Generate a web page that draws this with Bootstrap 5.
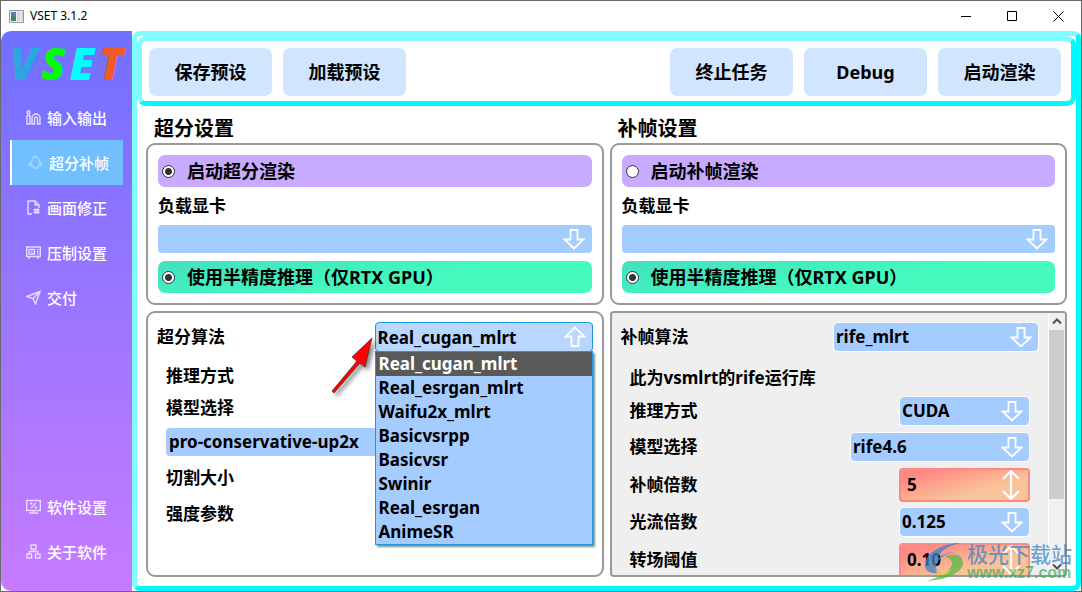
<!DOCTYPE html>
<html lang="zh-CN">
<head>
<meta charset="utf-8">
<meta name="viewport" content="width=device-width, initial-scale=1">
<title>VSET 3.1.2</title>
<link href="https://cdn.jsdelivr.net/npm/bootstrap@5.3.0/dist/css/bootstrap.min.css" rel="stylesheet">
<style>
  :root { --cy-light: #80fbff; --cy: #00f8ff; --line: #999; --sky: #a5ccff; }
  body { background: #6a6a6a; color: #000; font: 700 17px/24px "Noto Sans", "Noto Sans CJK SC", sans-serif; }
  .app { height: calc(100vh - 2px); margin: 1px; background: #fff; }
  .fit { min-height: 0; }
  .titlebar { height: 30px; padding-left: 8px; font-size: 12px; font-weight: 400; gap: 6px; }
  .titlebar button { width: 46px; height: 30px; padding: 0; border: 0; background: none; display: flex; align-items: center; justify-content: center; }

  .side { width: 131px; padding: 0 9px 17px; border-radius: 10px 0 0 10px; background: linear-gradient(#7070ff, #c77bff); }
  .logo { height: 64px; font: italic 900 44px/64px "Noto Sans", sans-serif; }
  .side a { height: 45px; padding-left: 16px; gap: 6px; color: #fff; font-size: 15px; font-weight: 500; text-decoration: none; white-space: nowrap; display: flex; align-items: center; }
  .side a.on { background: #72bfff; border-left: 2px solid #fff; }
  .side svg { width: 15px; height: 15px; fill: none; stroke: #e6dcff; stroke-width: 1.4; flex: none; }
  .side a.on svg { stroke: #9fd3ff; stroke-width: 1.8; }

  .frame { border: 5px solid; border-color: var(--cy-light) var(--cy) var(--cy) var(--cy-light); border-radius: 8px; min-width: 0; }
  .tools { border: 5px solid; border-color: var(--cy-light) var(--cy) var(--cy) var(--cy-light); border-radius: 9px; padding: 7px 10px 5px 7px; gap: 11px; }
  .tools .btn { width: 123px; height: 48px; padding: 0; border: 0; border-radius: 7px; background: #d1e5ff; color: #000; font-size: 18px; font-weight: 700; }

  .pair { display: grid; grid-template-columns: 1fr 1fr; column-gap: 6px; padding: 0 9px; }
  .pair h2 { margin: 0; padding: 9px 0 0 8px; font-size: 20px; font-weight: 700; line-height: 28px; }
  .lower { padding-top: 6px; padding-bottom: 9px; grid-template-rows: minmax(0, 1fr); }
  .box { border: 2px solid var(--line); border-radius: 9px; min-width: 0; }
  .switches { padding: 10px; }
  .opt { height: 32px; border-radius: 7px; padding-left: 4px; gap: 12px; font-size: 18px; display: flex; align-items: center; }
  .opt input { appearance: none; width: 13px; height: 13px; margin: 0; border: 1px solid #333; border-radius: 50%; background: #fff; flex: none; }
  .opt input:checked { background: radial-gradient(circle, #333 0 3px, #fff 4px); }
  .violet { background: #c8aaff; }
  .mint { background: linear-gradient(170deg, #43e0bf, #44fabf 60%); }
  .gpu { line-height: 38px; }

  .combo { display: block; width: 100%; height: 28px; padding: 0 36px 0 3px; border: 0; border-radius: 4px; appearance: none; color: #000; font-weight: 700;
    background: var(--sky) url("data:image/svg+xml,%3Csvg xmlns='http://www.w3.org/2000/svg' width='22' height='22'%3E%3Cpath d='M7.500 2h7v9.500h6L11 20.500 1.500 11.500h6z' fill='none' stroke='white' stroke-width='1.8'/%3E%3C/svg%3E") no-repeat right 7px center; }
  .edged { padding-left: 2px; border: 1px solid #fff; border-radius: 5px; background-position: right 6px center; height: 30px; }
  .w-a { width: 206px; }
  .w-b { width: 180px; }
  .w-c { width: 131px; }
  .spin { height: 34px; padding: 0 36px 0 6px; border: 2px solid #fc8983; border-radius: 4px; font-weight: 700; appearance: textfield; color: #000;
    background: url("data:image/svg+xml,%3Csvg xmlns='http://www.w3.org/2000/svg' width='18' height='32'%3E%3Cpath d='M9 2v28M1 10l8-8 8 8M1 22l8 8 8-8' fill='none' stroke='white' stroke-width='2.200'/%3E%3C/svg%3E") no-repeat right 8px center, linear-gradient(165deg, #ff8985 15%, #f8c398 65%); }
  .spin::-webkit-inner-spin-button { appearance: none; margin: 0; }

  .algo { padding: 9px 9px 0; }
  .pick { width: 218px; flex: none; }
  .pick .combo { height: 30px; padding: 1px 36px 0 2px; border: 1px solid #1e98dc; background-color: #b8d6ff; background-position: right 6px center;
    background-image: url("data:image/svg+xml,%3Csvg xmlns='http://www.w3.org/2000/svg' width='22' height='22'%3E%3Cpath d='M7.500 20h7v-9.500h6L11 1.500 1.500 10.500h6z' fill='none' stroke='white' stroke-width='1.8'/%3E%3C/svg%3E"); }
  .choices { top: 29px; left: 0; right: 0; z-index: 5; border: 1px solid #1e98dc; background: var(--sky); box-shadow: 2px 2px 2px #0007; }
  .choices li { padding-left: 3px; line-height: 24px; }
  .choices li.cur { background: #595959; color: #fff; }
  .sub { padding: 8px 0 0 9px; }
  .sub label { display: block; line-height: 32px; }
  .sub .tall { line-height: 36px; }
  .sub .combo { margin: 4px 0; }
  .pointer { left: -46px; top: 12px; z-index: 6; filter: drop-shadow(3px 3px 2px #0007); }

  .scroll { background: #efefef; border-radius: 4px; overflow: hidden; }
  .fields { padding: 9px 9px 0 9px; }
  .note { padding: 14px 0 3px 9px; }
  .field { height: 36px; padding: 0 9px; display: flex; align-items: center; justify-content: space-between; }
  .field.high { height: 39px; }
  .rail { width: 17px; border-left: 1px solid #fff; background: #f0f0f0; }
  .thumb { height: 74%; margin-right: 1px; background: #cdcdcd; }
  .rail button { height: 17px; width: 16px; border: 0; padding: 0; background: none; line-height: 0; }
  .wm { right: 9px; bottom: 8px; z-index: 9; pointer-events: none; }
  .wm span { display: block; font: 500 21px/24px "Noto Sans CJK SC", sans-serif; color: #3b83c8b8; }
  .wm small { display: block; font: 700 16px/16px "Liberation Sans", sans-serif; color: #41ad5db8; }
</style>
</head>
<body>
<div class="app d-flex flex-column position-relative">
  <header class="titlebar d-flex align-items-center">
    <svg width="15" height="13" viewBox="0 0 15 13"><path d="M.5.5h14v12H.5z" fill="#eee" stroke="#999"/><path d="M2 2h5v9H2z" fill="#3f8378"/><path d="M2 2h5v4H2z" fill="#5b7faa"/><path d="M8 2h3v9H8zM12 2h2v9h-2z" fill="#d5d9dc"/></svg>
    <span class="me-auto">VSET 3.1.2</span>
    <div class="d-flex">
      <button aria-label="最小化"><svg width="11" height="11"><path d="M0 5.500h10" stroke="#000"/></svg></button>
      <button aria-label="最大化"><svg width="11" height="11"><path d="M.5.5h9v9h-9z" fill="none" stroke="#000"/></svg></button>
      <button aria-label="关闭"><svg width="11" height="11"><path d="M.5.5l10 10m0-10l-10 10" stroke="#000"/></svg></button>
    </div>
  </header>

  <div class="d-flex flex-grow-1 fit">
    <nav class="side d-flex flex-column flex-shrink-0">
      <svg width="0" height="0" class="d-none"></svg>
      <div class="logo d-flex justify-content-between"><span style="color:#2aa7e0">V</span><span style="color:#0f0">S</span><span style="color:#0ff">E</span><span style="color:#f15a24">T</span></div>
      <a href="#io"><svg viewBox="0 0 15 15"><circle cx="2.500" cy="2.200" r="1.500"/><path d="M1 5.500h3v8.500H1zM6 14V8a4 4 0 0 1 8 0v6h-2.500V8.500a1.500 1.500 0 0 0-3 0V14z"/></svg>输入输出</a>
      <a href="#sr" class="on"><svg viewBox="0 0 15 15"><path d="M7.500 1C4.500 3 3 6 3.500 9.500 4 12 6 13 7.500 13.500 9 13 11 12 11.500 9.500 12 6 10.500 3 7.500 1zM3 7L1 10l2.500 1M12 7l2 3-2.500 1"/></svg>超分补帧</a>
      <a href="#fix"><svg viewBox="0 0 15 15"><path d="M6 14H2V1h7l4 4v3M9 1v4h4M7.500 9.700h6M7.500 12.300h6M9.500 8.500v5.500M11.800 8.500v5.500"/></svg>画面修正</a>
      <a href="#enc"><svg viewBox="0 0 15 15"><path d="M.7 2h13.600v9.500H.7zM3 4.500h5.500V9H3zM5 6.700h1.500M11 4.500h1.500M11 6.700h1.500M11 9h1.500M3 12v2M12 12v2"/></svg>压制设置</a>
      <a href="#out"><svg viewBox="0 0 15 15"><path d="M1 6.500L14 1.500 9.500 14 7 8.500zM7 8.500l7-7"/></svg>交付</a>
      <a href="#set" class="mt-auto"><svg viewBox="0 0 15 15"><path d="M.7 1.500h13.600v10H.7zM3 14h9M7.500 11.500V14M5 9l5-5M4 4.500h2.500M5.200 3.300v2.500M8.500 8.500H11M9.700 7.300v2.500"/></svg>软件设置</a>
      <a href="#about"><svg viewBox="0 0 15 15"><path d="M5 1h5v4H5zM1 10h4.500v4H1zM9.500 10H14v4H9.500zM7.500 5v2.500M3.300 10V7.500h8.400V10"/></svg>关于软件</a>
    </nav>

    <main class="frame flex-grow-1 d-flex flex-column">
      <div class="tools d-flex">
        <button class="btn">保存预设</button>
        <button class="btn me-auto">加载预设</button>
        <button class="btn">终止任务</button>
        <button class="btn">Debug</button>
        <button class="btn">启动渲染</button>
      </div>

      <div class="pair">
        <h2>超分设置</h2><h2>补帧设置</h2>
        <section class="box switches">
          <label class="opt violet"><input type="radio" name="sr" checked>启动超分渲染</label>
          <label class="gpu" for="g1">负载显卡</label>
          <select id="g1" class="combo mb-2"></select>
          <label class="opt mint"><input type="radio" name="half1" checked>使用半精度推理（仅RTX GPU）</label>
        </section>
        <section class="box switches">
          <label class="opt violet"><input type="radio" name="vfi">启动补帧渲染</label>
          <label class="gpu" for="g2">负载显卡</label>
          <select id="g2" class="combo mb-2"></select>
          <label class="opt mint"><input type="radio" name="half2" checked>使用半精度推理（仅RTX GPU）</label>
        </section>
      </div>

      <div class="pair lower flex-grow-1 fit">
        <section class="box algo">
          <div class="d-flex align-items-center justify-content-between">
            <label for="alg">超分算法</label>
            <div class="pick position-relative">
              <select id="alg" class="combo"><option>Real_cugan_mlrt</option></select>
              <ul class="choices list-unstyled position-absolute m-0">
                <li class="cur">Real_cugan_mlrt</li><li>Real_esrgan_mlrt</li><li>Waifu2x_mlrt</li><li>Basicvsrpp</li><li>Basicvsr</li><li>Swinir</li><li>Real_esrgan</li><li>AnimeSR</li>
              </ul>
              <svg class="pointer position-absolute" width="50" height="64" viewBox="0 0 50 64"><path d="M3 57L28 27 23 23 43 4 36 33 31 29 5 59z" fill="#f00" stroke="#333" stroke-width=".7"/></svg>
            </div>
          </div>
          <div class="sub">
            <label>推理方式</label>
            <label for="mdl">模型选择</label>
            <select id="mdl" class="combo"><option>pro-conservative-up2x</option></select>
            <label class="tall">切割大小</label>
            <label class="tall">强度参数</label>
          </div>
        </section>

        <section class="box scroll d-flex fit">
          <div class="fields flex-grow-1">
            <div class="d-flex align-items-center justify-content-between">
              <label for="v0">补帧算法</label>
              <select id="v0" class="combo edged w-a"><option>rife_mlrt</option></select>
            </div>
            <div class="note">此为vsmlrt的rife运行库</div>
            <div class="field"><label for="v1">推理方式</label><select id="v1" class="combo edged w-c"><option>CUDA</option></select></div>
            <div class="field"><label for="v2">模型选择</label><select id="v2" class="combo edged w-b"><option>rife4.6</option></select></div>
            <div class="field high"><label for="v3">补帧倍数</label><input id="v3" class="spin w-c" type="number" value="5"></div>
            <div class="field"><label for="v4">光流倍数</label><select id="v4" class="combo edged w-c"><option>0.125</option></select></div>
            <div class="field high"><label for="v5">转场阈值</label><input id="v5" class="spin w-c" type="number" step="0.01" value="0.10"></div>
          </div>
          <div class="rail d-flex flex-column flex-shrink-0">
            <button aria-label="向上"><svg width="10" height="7"><path d="M1 5.500l4-4 4 4" fill="none" stroke="#505050" stroke-width="2"/></svg></button>
            <div class="flex-grow-1"><div class="thumb"></div></div>
            <button aria-label="向下"><svg width="10" height="7"><path d="M1 1.500l4 4 4-4" fill="none" stroke="#505050" stroke-width="2"/></svg></button>
          </div>
        </section>
      </div>
    </main>
  </div>

  <div class="wm position-absolute d-flex">
    <svg width="44" height="42" viewBox="0 0 44 42" opacity=".75"><path d="M2 25C2 10 22 2 38 2 26 4 17 10 15 17c8-6 17-6 17-6-12 2-19 9-19 15 0 3 2 5 5 6C8 33 2 31 2 25z" fill="#3b83c8"/><path d="M22 16c9-5 18-2 18 6 0 10-18 17-36 18 12-4 24-10 25-17 0-4-3-6-7-7z" fill="#58b946"/><path d="M12 27c2 6 10 6 16 1-3 7-14 10-16-1z" fill="#e6c93c"/></svg>
    <div><span>极光下载站</span><small>www.xz7.com</small></div>
  </div>
</div>
<script src="https://cdn.jsdelivr.net/npm/bootstrap@5.3.0/dist/js/bootstrap.bundle.min.js"></script>
</body>
</html>
